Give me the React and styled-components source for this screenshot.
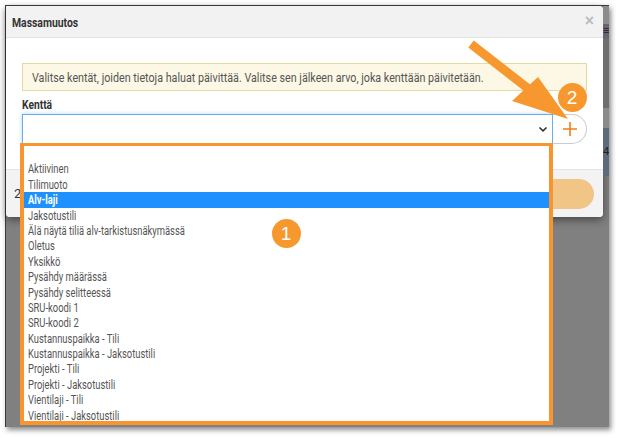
import React from 'react';
import styled, { createGlobalStyle } from 'styled-components';

const GlobalStyle = createGlobalStyle`
  html, body { margin: 0; padding: 0; background: #fff; }
  body { font-family: "Roboto", "Liberation Sans", sans-serif; }
  * { box-sizing: border-box; }
`;

const ORANGE = '#f9952f';

// the app uses a condensed face; squeeze Roboto to the same width
const Narrow = styled.span`
  display: inline-block;
  white-space: nowrap;
  transform: scaleX(${p => p.k || 0.78});
  transform-origin: left center;
`;

const Stage = styled.div`
  position: relative;
  width: 618px;
  height: 438px;
  overflow: hidden;
  background: #fff;
`;

const Frame = styled.div`
  margin: 5px;
  width: 604px;
  height: 422px;
  background: #808080;
  border-top: 1px solid #3c3c3c;
  border-left: 1px solid #3c3c3c;
  box-shadow: 2px 3px 5px rgba(0, 0, 0, 0.45);
  display: flex;
  align-items: flex-start;
`;

const Modal = styled.div`
  width: 597px;
  flex: none;
  background: #fff;
  border-radius: 0 4px 4px 4px;
  box-shadow: 0 3px 8px rgba(0, 0, 0, 0.45);
  overflow: hidden;
`;

const Header = styled.div`
  height: 32px;
  background: #f2f2f2;
  border-bottom: 1px solid #e2e2e2;
  display: flex;
  align-items: center;
  justify-content: space-between;
  padding: 1px 6px 0;
`;

const Title = styled.div`
  font-size: 13px;
  font-weight: bold;
  color: #333;
`;

const Close = styled.div`
  font-family: "Liberation Sans", sans-serif;
  font-size: 16px;
  font-weight: bold;
  color: #bbb;
  margin-top: -3px;
  margin-right: 3px;
`;

const Body = styled.div`
  padding: 25px 16px 25px;
`;

const Alert = styled.div`
  height: 28px;
  background: #fcf8e5;
  border: 1px solid #e2dba4;
  padding: 0 9px;
  display: flex;
  align-items: center;
  font-size: 13.5px;
  color: #555;
  overflow: hidden;
`;

const Label = styled.div`
  margin: 7px 0 3px;
  line-height: 13px;
  font-size: 12.5px;
  font-weight: bold;
  color: #333;
`;

const InputRow = styled.div`
  display: flex;
  height: 30px;
`;

const Select = styled.div`
  flex: 1;
  border: 1px solid #66afe9;
  box-shadow: 0 0 4px rgba(102, 175, 233, 0.5);
  display: flex;
  align-items: center;
  justify-content: flex-end;
  padding-right: 4px;
  background: #fff;
`;

const AddButton = styled.div`
  width: 34px;
  border: 1px solid #ccc;
  border-left: none;
  border-radius: 0 15px 15px 0;
  display: flex;
  align-items: center;
  justify-content: center;
  background: #fff;
`;

const Footer = styled.div`
  height: 48px;
  background: #f3f3f3;
  border-top: 1px solid #e3e3e3;
  display: flex;
  align-items: center;
  justify-content: space-between;
  padding: 0 9px 0 8px;
  font-size: 13px;
  color: #333;
`;

const SaveButton = styled.div`
  width: 120px;
  height: 30px;
  border-radius: 15px;
  background: #f1c586;
  color: #fff;
  display: flex;
  align-items: center;
  justify-content: center;
  font-size: 12px;
`;

const AppStrip = styled.div`
  flex: 1;
  display: flex;
  flex-direction: column;
`;

const StripBlock = styled.div`
  height: ${p => p.h}px;
  background: ${p => p.bg};
  color: #222;
  font-size: 11px;
  overflow: hidden;
  line-height: ${p => p.h}px;
`;

const OptionList = styled.div`
  position: absolute;
  left: 20px;
  top: 143px;
  width: 533px;
  height: 282px;
  border: 4px solid ${ORANGE};
  border-top-width: 3px;
  background: #fff;
  overflow: hidden;
`;

const Option = styled.div`
  height: 15.4px;
  line-height: 15.4px;
  padding-left: 4px;
  font-size: 12.7px;
  white-space: nowrap;
  color: ${p => (p.selected ? '#fff' : '#555')};
  background: ${p => (p.selected ? '#1e90ff' : 'transparent')};
  font-weight: ${p => (p.selected ? 'bold' : 'normal')};
`;

const Badge = styled.div`
  position: absolute;
  left: ${p => p.x - 14.5}px;
  top: ${p => p.y - 14.5}px;
  width: 29px;
  height: 29px;
  border-radius: 50%;
  background: #f7982f;
  color: #fff;
  font-family: "Liberation Sans", sans-serif;
  font-size: 19px;
  display: flex;
  align-items: center;
  justify-content: center;
`;

const Overlay = styled.svg`
  position: absolute;
  left: 0;
  top: 0;
  pointer-events: none;
`;

const options = [
  '',
  'Aktiivinen',
  'Tilimuoto',
  'Alv-laji',
  'Jaksotustili',
  'Älä näytä tiliä alv-tarkistusnäkymässä',
  'Oletus',
  'Yksikkö',
  'Pysähdy määrässä',
  'Pysähdy selitteessä',
  'SRU-koodi 1',
  'SRU-koodi 2',
  'Kustannuspaikka - Tili',
  'Kustannuspaikka - Jaksotustili',
  'Projekti - Tili',
  'Projekti - Jaksotustili',
  'Vientilaji - Tili',
  'Vientilaji - Jaksotustili',
];

export default function App() {
  return (
    <Stage>
      <GlobalStyle />
      <Frame>
        <Modal>
          <Header>
            <Title><Narrow k={0.8}>Massamuutos</Narrow></Title>
            <Close>×</Close>
          </Header>
          <Body>
            <Alert>
              <Narrow k={0.795}>Valitse kentät, joiden tietoja haluat päivittää. Valitse sen jälkeen arvo, joka kenttään päivitetään.</Narrow>
            </Alert>
            <Label><Narrow k={0.82}>Kenttä</Narrow></Label>
            <InputRow>
              <Select>
                <svg width="10" height="10" viewBox="0 0 10 10">
                  <path d="M1.5 3.5 L5 6.8 L8.5 3.5" fill="none" stroke="#333" strokeWidth="1.6" />
                </svg>
              </Select>
              <AddButton>
                <svg width="16" height="16" viewBox="0 0 16 16">
                  <path d="M8 1 V15 M1 8 H15" stroke="#ef7d1a" strokeWidth="1.6" />
                </svg>
              </AddButton>
            </InputRow>
          </Body>
          <Footer>
            <span>2</span>
            <SaveButton>Päivitä</SaveButton>
          </Footer>
        </Modal>
        <AppStrip>
          <StripBlock h={18} bg="#8c8c8c" />
          <StripBlock h={14} bg="#6a6470">≡</StripBlock>
          <StripBlock h={70} bg="#6e6e6e" />
          <StripBlock h={20} bg="#8a8a8a" />
          <StripBlock h={48} bg="#5c6b7a">4</StripBlock>
        </AppStrip>
      </Frame>

      <OptionList>
        {options.map((o, i) => (
          <Option key={i} selected={o === 'Alv-laji'}>
            <Narrow k={0.74}>{o}</Narrow>
          </Option>
        ))}
      </OptionList>

      <Overlay width="618" height="438" viewBox="0 0 618 438">
        <line x1="471" y1="44" x2="530" y2="90" stroke="#f7982f" strokeWidth="9" />
        <polygon points="512,101 538,77 568,119" fill="#f7982f" />
      </Overlay>
      <Badge x={286} y={233.5}>1</Badge>
      <Badge x={572} y={97.5}>2</Badge>
    </Stage>
  );
}
